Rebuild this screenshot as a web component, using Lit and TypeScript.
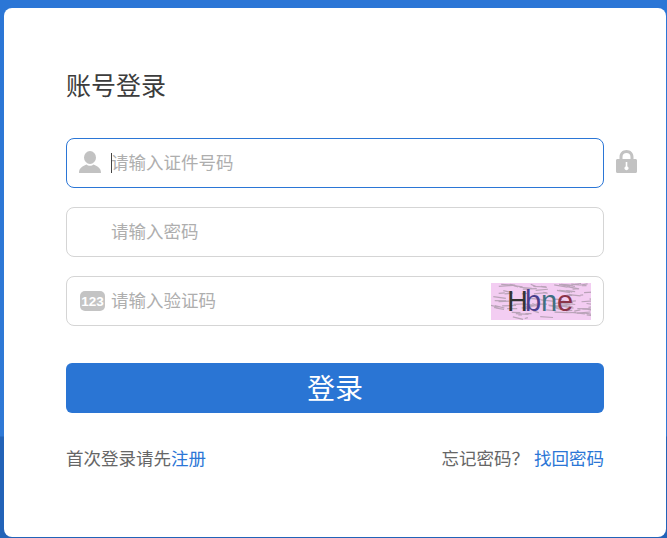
import { LitElement, html, css, svg } from "lit";
import { customElement } from "lit/decorators.js";

/* deterministic speckle for the captcha picture */
function speckle(): [number, number, number, number][] {
  const out: [number, number, number, number][] = [];
  let s = 7;
  const r = () => (s = (s * 16807) % 2147483647) / 2147483647;
  for (let i = 0; i < 90; i++) {
    const x = r() * 100;
    const y = r() * r() * 14 + (r() > 0.55 ? 1 : 23 - r() * 6) + (r() > 0.7 ? 6 : 0);
    const l = 3 + r() * 11;
    out.push([x, y, x + l, y + (r() - 0.35) * 4]);
  }
  return out;
}
const noise = speckle();

@customElement("app-root")
export class AppRoot extends LitElement {
  static styles = css`
    :host {
      display: block;
      width: 667px;
      height: 538px;
      overflow: hidden;
      font-family: "Noto Sans CJK SC", "Liberation Sans", sans-serif;
    }
    .page {
      box-sizing: border-box;
      height: 538px;
      padding: 8px 1px 1px 4px;
      background: linear-gradient(to bottom, #2b76d6 0, #2f79d6 436px, #2263b8 437px, #2263b8 100%);
    }
    .card {
      box-sizing: border-box;
      height: 529px;
      padding: 59px 62px 0;
      background: #fff;
      border-radius: 8px;
    }
    h1 {
      margin: 0 0 36px;
      height: 35px;
      font-size: 25px;
      line-height: 35px;
      font-weight: 400;
      color: #3c3c3c;
    }
    .rows { display: flex; flex-direction: column; gap: 19px; }
    .row { display: flex; align-items: center; width: 571px; gap: 12px; }
    .field {
      position: relative;
      box-sizing: border-box;
      flex: none;
      width: 538px;
      height: 50px;
      display: flex;
      align-items: center;
      gap: 6px;
      padding: 0 12px 0 13px;
      border: 1px solid #d5d5d5;
      border-radius: 8px;
      background: #fff;
    }
    .field.focus { border-color: #2b76d6; }
    .slot { flex: none; width: 25px; height: 25px; display: flex; align-items: center; }
    .slot svg { display: block; }
    .slot .user { margin: -2px 0 0 -1px; }
    input {
      flex: 1;
      min-width: 0;
      height: 30px;
      border: 0;
      outline: 0;
      padding: 0 0 3px;
      box-sizing: border-box;
      background: transparent;
      font: inherit;
      font-size: 17.5px;
      color: #333;
    }
    input::placeholder { color: #aeaeae; opacity: 1; }
    .caret { position: absolute; left: 44px; top: 14px; width: 1px; height: 20px; background: #444; }
    .captcha { flex: none; width: 100px; height: 37px; display: block; }
    .captcha .blot { filter: blur(0.35px); }
    .captcha text { font-family: "Liberation Sans", sans-serif; font-size: 29px; }
    .lock { flex: none; display: block; margin-top: -3px; }
    button {
      display: block;
      width: 538px;
      height: 50px;
      margin-top: 37px;
      border: 0;
      border-radius: 6px;
      background: #2a75d4;
      color: #fff;
      font: inherit;
      font-size: 28px;
      line-height: 48px;
      padding: 0 0 2px;
    }
    .foot {
      width: 538px;
      margin-top: 32px;
      display: flex;
      justify-content: space-between;
      font-size: 17.5px;
      line-height: 26px;
      color: #666;
    }
    a { color: #2b76d6; text-decoration: none; }
    .gap { margin-left: 5px; }
  `;

  render() {
    return html`
      <div class="page">
        <div class="card">
          <h1>账号登录</h1>
          <div class="rows">
            <div class="row">
              <div class="field focus">
                <span class="slot">
                  <svg class="user" width="22" height="22" viewBox="0 0 22 22">
                    <ellipse cx="11" cy="6.5" rx="6" ry="6.5" fill="#c2c2c2" />
                    <path d="M0 22 C0 17 3 15.5 7.5 13.5 C9 15.2 13 15.2 14.5 13.5 C19 15.5 22 17 22 22 Z" fill="#c2c2c2" />
                  </svg>
                </span>
                <input placeholder="请输入证件号码" />
                <i class="caret"></i>
              </div>
              <svg class="lock" width="21" height="23" viewBox="0 0 21 23">
                <path fill-rule="evenodd" fill="#c2c2c2" d="M3.5 9 V7 C3.5 2.8 6.4 0 10.5 0 S17.5 2.8 17.5 7 V9 H19.5 C20.4 9 21 9.6 21 10.5 V21.5 C21 22.4 20.4 23 19.5 23 H1.5 C.6 23 0 22.4 0 21.5 V10.5 C0 9.6 .6 9 1.5 9 Z M6.5 9 H14.5 V7 C14.5 4.6 13 3 10.5 3 S6.5 4.6 6.5 7 Z" />
                <path fill="#fff" d="M9.7 12 H11.3 V16.6 C12.2 17 12.6 17.6 12.6 18.3 C12.6 19.4 11.6 20.2 10.5 20.2 S8.4 19.4 8.4 18.3 C8.4 17.6 8.8 17 9.7 16.6 Z" />
              </svg>
            </div>
            <div class="row">
              <div class="field">
                <span class="slot"></span>
                <input type="password" placeholder="请输入密码" />
              </div>
            </div>
            <div class="row">
              <div class="field">
                <span class="slot">
                  <svg width="25" height="20" viewBox="0 0 25 20">
                    <rect width="25" height="20" rx="5" fill="#c4c4c4" />
                    <text x="12.5" y="15" text-anchor="middle" fill="#fff" font-family="Liberation Sans, sans-serif" font-size="13.5" font-weight="700">123</text>
                  </svg>
                </span>
                <input placeholder="请输入验证码" />
                <svg class="captcha" viewBox="0 0 100 37">
                  <rect width="100" height="37" fill="#f3cdf2" />
                  <g class="blot">
                    ${noise.map(([a, b, c, d]) => svg`<line x1=${a} y1=${b} x2=${c} y2=${d} stroke="#b9a3b8" stroke-width="1.2" />`)}
                  </g>
                  <text y="28"><tspan x="16" fill="#333333">H</tspan><tspan x="34" fill="#4a3f8c">b</tspan><tspan x="50" fill="#3f6f80">n</tspan><tspan x="66" fill="#8a3348">e</tspan></text>
                </svg>
              </div>
            </div>
          </div>
          <button>登录</button>
          <div class="foot">
            <span>首次登录请先<a href="#">注册</a></span>
            <span>忘记密码？<a class="gap" href="#">找回密码</a></span>
          </div>
        </div>
      </div>
    `;
  }
}
